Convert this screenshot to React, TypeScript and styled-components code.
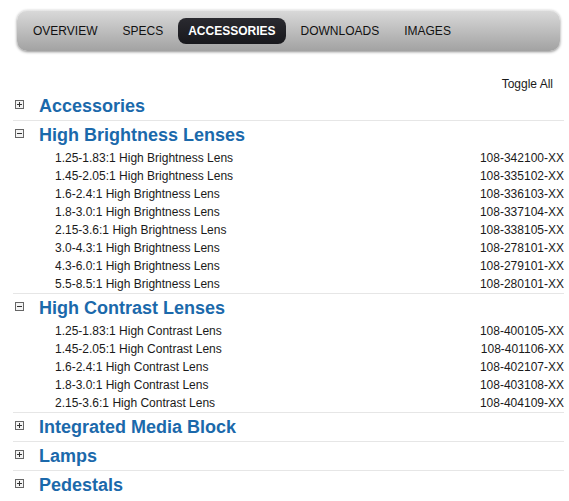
import React, { useState } from 'react';
import { styled, createGlobalStyle } from 'styled-components';

type Section = {
  title: string;
  items: [string, string][];
};

const sections: Section[] = [
  { title: 'Accessories', items: [] },
  {
    title: 'High Brightness Lenses',
    items: [
      ['1.25-1.83:1 High Brightness Lens', '108-342100-XX'],
      ['1.45-2.05:1 High Brightness Lens', '108-335102-XX'],
      ['1.6-2.4:1 High Brightness Lens', '108-336103-XX'],
      ['1.8-3.0:1 High Brightness Lens', '108-337104-XX'],
      ['2.15-3.6:1 High Brightness Lens', '108-338105-XX'],
      ['3.0-4.3:1 High Brightness Lens', '108-278101-XX'],
      ['4.3-6.0:1 High Brightness Lens', '108-279101-XX'],
      ['5.5-8.5:1 High Brightness Lens', '108-280101-XX'],
    ],
  },
  {
    title: 'High Contrast Lenses',
    items: [
      ['1.25-1.83:1 High Contrast Lens', '108-400105-XX'],
      ['1.45-2.05:1 High Contrast Lens', '108-401106-XX'],
      ['1.6-2.4:1 High Contrast Lens', '108-402107-XX'],
      ['1.8-3.0:1 High Contrast Lens', '108-403108-XX'],
      ['2.15-3.6:1 High Contrast Lens', '108-404109-XX'],
    ],
  },
  { title: 'Integrated Media Block', items: [] },
  { title: 'Lamps', items: [] },
  { title: 'Pedestals', items: [] },
];

const tabs = ['OVERVIEW', 'SPECS', 'ACCESSORIES', 'DOWNLOADS', 'IMAGES'];

const GlobalStyle = createGlobalStyle`
  body {
    margin: 0;
    background: #fff;
    font-family: "Liberation Sans", Arial, sans-serif;
    color: #1a1a1a;
  }
`;

const Page = styled.div`
  width: 569px;
  padding-top: 10px;
`;

const TabBar = styled.nav`
  display: flex;
  align-items: center;
  gap: 5px;
  height: 41px;
  box-sizing: border-box;
  margin: 0 9px 0 17px;
  padding: 1px 6px 0;
  border-radius: 10px;
  background: linear-gradient(#dadada, #a2a2a2);
  box-shadow: 0 1px 3px rgba(0, 0, 0, 0.45), inset 0 1px 0 rgba(255, 255, 255, 0.35);
`;

const Tab = styled.a<{ $active?: boolean }>`
  display: flex;
  align-items: center;
  height: 26px;
  padding: 0 10px;
  border-radius: 8px;
  font-size: 12px;
  font-weight: ${(p) => (p.$active ? 'bold' : 'normal')};
  color: ${(p) => (p.$active ? '#fff' : '#111')};
  background: ${(p) => (p.$active ? 'linear-gradient(#2a2a30, #18181c)' : 'transparent')};
  cursor: pointer;
`;

const Content = styled.div`
  margin: 0 5px 0 13px;
`;

const ToggleRow = styled.div`
  display: flex;
  justify-content: flex-end;
  padding: 26px 11px 0 0;
  height: 41px;
  box-sizing: border-box;
  font-size: 12px;
  line-height: 14px;
`;

const Block = styled.section<{ $last?: boolean }>`
  border-bottom: ${(p) => (p.$last ? 'none' : '1px solid #e6e6e6')};
`;

const Header = styled.div`
  display: flex;
  align-items: center;
  height: 28px;
  padding-left: 2px;
  cursor: pointer;
`;

const Title = styled.h2`
  margin: 0 0 0 15px;
  font-size: 18px;
  font-weight: bold;
  color: #1b69ab;
`;

const Items = styled.ul`
  list-style: none;
  margin: 0;
  padding: 0 0 0 42px;
`;

const Item = styled.li`
  display: flex;
  justify-content: space-between;
  height: 18px;
  line-height: 18px;
  font-size: 12px;
  color: #1a1a1a;
`;

function Toggle({ open }: { open: boolean }) {
  return (
    <svg width="9" height="9" viewBox="0 0 9 9" style={{ marginTop: -3 }}>
      <rect x="0.5" y="0.5" width="8" height="8" fill="#f4f4f4" stroke="#666" />
      <path d="M2 4.5h5" stroke="#333" />
      {!open && <path d="M4.5 2v5" stroke="#333" />}
    </svg>
  );
}

export default function App() {
  const [open, setOpen] = useState<Record<string, boolean>>({
    'High Brightness Lenses': true,
    'High Contrast Lenses': true,
  });

  return (
    <Page>
      <GlobalStyle />
      <TabBar>
        {tabs.map((t) => (
          <Tab key={t} $active={t === 'ACCESSORIES'}>
            {t}
          </Tab>
        ))}
      </TabBar>
      <Content>
        <ToggleRow>Toggle All</ToggleRow>
        {sections.map((s, i) => {
          const isOpen = !!open[s.title];
          return (
            <Block key={s.title} $last={i === sections.length - 1}>
              <Header onClick={() => setOpen({ ...open, [s.title]: !isOpen })}>
                <Toggle open={isOpen} />
                <Title>{s.title}</Title>
              </Header>
              {isOpen && (
                <Items>
                  {s.items.map(([name, code]) => (
                    <Item key={code}>
                      <span>{name}</span>
                      <span>{code}</span>
                    </Item>
                  ))}
                </Items>
              )}
            </Block>
          );
        })}
      </Content>
    </Page>
  );
}
